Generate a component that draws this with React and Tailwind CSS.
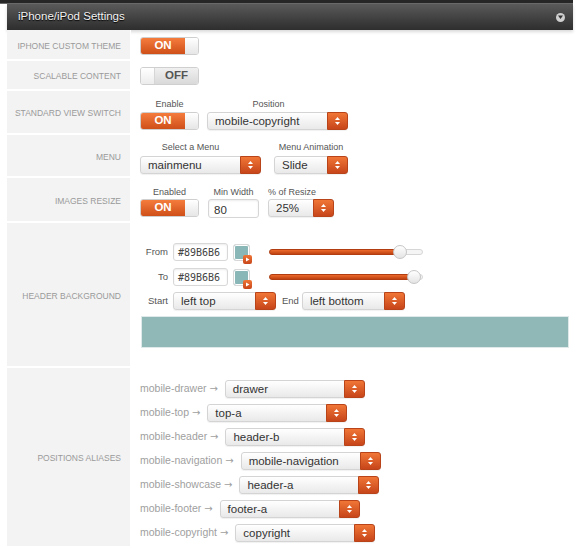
import React from "react";

const FONT = { fontFamily: '"Liberation Sans", Arial, sans-serif' };

function Arrows() {
  return (
    <svg width="7" height="10" viewBox="0 0 7 10">
      <path d="M1 4 L3.5 1 L6 4 Z" fill="#fff" />
      <path d="M1 6 L3.5 9 L6 6 Z" fill="#fff" />
    </svg>
  );
}

function Select({ value, w }) {
  return (
    <div className={`flex h-[18px] ${w} rounded-[3px] border border-[#d4d4d4] bg-linear-to-b from-white to-[#e9e9e9] shadow-[0_1px_1px_rgba(0,0,0,0.06)]`}>
      <span className="flex-1 pl-[7px] text-[11.5px] leading-[16px] text-[#333] whitespace-nowrap overflow-hidden">{value}</span>
      <span className="w-[21px] -my-px -mr-px rounded-r-[3px] bg-linear-to-b from-[#f07636] to-[#c7451a] border border-[#b9441a] flex items-center justify-center">
        <Arrows />
      </span>
    </div>
  );
}

function Toggle({ on }) {
  if (on) {
    return (
      <div className="flex h-[18px] w-[59px] rounded-[3px] border border-[#cfcfcf] overflow-hidden">
        <div className="w-[44px] bg-linear-to-b from-[#f47c3c] to-[#cf4f18] text-white font-bold text-[11.5px] flex items-center justify-center">ON</div>
        <div className="flex-1 bg-linear-to-b from-white to-[#e6e6e6]" />
      </div>
    );
  }
  return (
    <div className="flex h-[18px] w-[59px] rounded-[3px] border border-[#cfcfcf] overflow-hidden">
      <div className="w-[14px] bg-linear-to-b from-white to-[#ececec] border-r border-[#d6d6d6]" />
      <div className="flex-1 bg-linear-to-b from-[#f0f0f0] to-[#d9d9d9] text-[#555] font-bold text-[11.5px] flex items-center justify-center">OFF</div>
    </div>
  );
}

function Caption({ children, className = "" }) {
  return <div className={`text-[9px] leading-[12px] text-[#555] ${className}`}>{children}</div>;
}

function Swatch() {
  return (
    <div className="relative w-[17px] h-[17px] rounded-[3px] border border-[#d8d8d8] bg-[#89B6B6] shadow-[inset_0_0_0_1px_#fff]">
      <div className="absolute -right-[3px] -bottom-[4px] w-[9px] h-[9px] rounded-[2px] bg-linear-to-b from-[#f07636] to-[#c7451a] flex items-center justify-center">
        <svg width="5" height="5" viewBox="0 0 5 5">
          <path d="M1 0.5 L4.5 2.5 L1 4.5 Z" fill="#fff" />
        </svg>
      </div>
    </div>
  );
}

function Slider({ knob }) {
  return (
    <div className="relative w-[154px] h-[14px] flex items-center">
      <div className="h-[6px] w-full rounded-full border border-[#d6d6d6] bg-[#f5f5f5]" />
      <div className="absolute left-0 h-[6px] rounded-full bg-linear-to-b from-[#ec6a2c] to-[#bf4212] border border-[#b23d10]" style={{ width: knob + 4 }} />
      <div className="absolute top-0 w-[14px] h-[14px] rounded-full border border-[#c6c6c6] bg-linear-to-b from-white to-[#e4e4e4]" style={{ left: knob - 7 }} />
    </div>
  );
}

function HexInput() {
  return (
    <div className="w-[55px] h-[18px] rounded-[3px] border border-[#d8d8d8] bg-white shadow-[inset_0_1px_2px_rgba(0,0,0,0.08)] flex items-center pl-[4px]">
      <span className="text-[10px] text-[#444]" style={{ fontFamily: '"DejaVu Sans Mono", monospace' }}>#89B6B6</span>
    </div>
  );
}

function Row({ h, label, children, contentClass = "" }) {
  return (
    <div className={`flex ${h}`}>
      <div className="w-[123px] shrink-0 bg-[#f3f3f3] border-b-2 border-white flex items-center justify-end pr-[9px] pt-[3px] text-[8.5px] text-[#9a9a9a] uppercase">
        {label}
      </div>
      <div className={`flex-1 pl-[9px] border-l border-white ${contentClass}`}>{children}</div>
    </div>
  );
}

const aliases = [
  ["mobile-drawer", "drawer"],
  ["mobile-top", "top-a"],
  ["mobile-header", "header-b"],
  ["mobile-navigation", "mobile-navigation"],
  ["mobile-showcase", "header-a"],
  ["mobile-footer", "footer-a"],
  ["mobile-copyright", "copyright"],
];

export default function App() {
  return (
    <div className="w-[579px] h-[548px] overflow-hidden bg-white" style={FONT}>
      <div className="w-[573px] h-[4px] bg-[#262626] border-b border-[#6a6a6a]" />
      <div className="ml-[7px] w-[566px] h-[26px] bg-linear-to-b from-[#5a5a5a] to-[#2e2e2e] flex items-center justify-between pl-[11px] pr-[8px] shadow-[0_2px_3px_rgba(0,0,0,0.15)]">
        <span className="text-[11.5px] text-[#f2f2f2] [text-shadow:0_1px_1px_#000]">iPhone/iPod Settings</span>
        <span className="w-[9px] h-[9px] rounded-full bg-[#cfcfcf] flex items-center justify-center">
          <svg width="5" height="4" viewBox="0 0 5 4">
            <path d="M0 0.5 L5 0.5 L2.5 4 Z" fill="#333" />
          </svg>
        </span>
      </div>

      <div className="ml-[7px] w-[566px]">
        <Row h="h-[31px]" label="iPhone Custom Theme" contentClass="flex items-center">
          <Toggle on />
        </Row>
        <Row h="h-[30px]" label="Scalable Content" contentClass="flex items-center">
          <Toggle on={false} />
        </Row>
        <Row h="h-[44px]" label="Standard View Switch" contentClass="pt-[7px] flex gap-[8px]">
          <div className="flex flex-col items-center gap-[2px]">
            <Caption>Enable</Caption>
            <Toggle on />
          </div>
          <div className="flex flex-col items-center gap-[2px]">
            <Caption className="pr-[18px]">Position</Caption>
            <Select value="mobile-copyright" w="w-[141px]" />
          </div>
        </Row>
        <Row h="h-[43px]" label="Menu" contentClass="pt-[6px] flex gap-[13px]">
          <div className="flex flex-col items-center gap-[3px]">
            <Caption className="pr-[20px]">Select a Menu</Caption>
            <Select value="mainmenu" w="w-[121px]" />
          </div>
          <div className="flex flex-col items-center gap-[3px]">
            <Caption className="whitespace-nowrap">Menu Animation</Caption>
            <Select value="Slide" w="w-[74px]" />
          </div>
        </Row>
        <Row h="h-[45px]" label="Images Resize" contentClass="pt-[8px] flex gap-[9px]">
          <div className="flex flex-col items-center gap-[1px]">
            <Caption>Enabled</Caption>
            <Toggle on />
          </div>
          <div className="flex flex-col items-center gap-[1px]">
            <Caption>Min Width</Caption>
            <div className="w-[51px] h-[19px] rounded-[3px] border border-[#d6d6d6] bg-white shadow-[inset_0_1px_2px_rgba(0,0,0,0.08)] pl-[5px] pt-[2px] text-[11.5px] text-[#333]">80</div>
          </div>
          <div className="flex flex-col items-start gap-[1px]">
            <Caption>% of Resize</Caption>
            <Select value="25%" w="w-[66px]" />
          </div>
        </Row>
        <Row h="h-[145px]" label="Header Background" contentClass="pt-[20px] flex flex-col">
          <div className="flex items-center h-[18px]">
            <span className="w-[28px] text-right text-[9.5px] text-[#555]">From</span>
            <div className="ml-[5px]"><HexInput /></div>
            <div className="ml-[5px]"><Swatch /></div>
            <div className="ml-[19px]"><Slider knob={131} /></div>
          </div>
          <div className="flex items-center h-[18px] mt-[7px]">
            <span className="w-[28px] text-right text-[9.5px] text-[#555]">To</span>
            <div className="ml-[5px]"><HexInput /></div>
            <div className="ml-[5px]"><Swatch /></div>
            <div className="ml-[19px]"><Slider knob={145} /></div>
          </div>
          <div className="flex items-center h-[18px] mt-[6px]">
            <span className="w-[28px] text-right text-[9.5px] text-[#555]">Start</span>
            <div className="ml-[5px]"><Select value="left top" w="w-[103px]" /></div>
            <span className="ml-[6px] text-[9.5px] text-[#555]">End</span>
            <div className="ml-[3px]"><Select value="left bottom" w="w-[103px]" /></div>
          </div>
          <div className="ml-[1px] mt-[6px] w-[428px] h-[32px] bg-[#8FB8B7] border border-[#dfe9e9]" />
        </Row>
        <Row h="h-[180px]" label="Positions Aliases" contentClass="pt-[12px] flex flex-col gap-[6px]">
          {aliases.map(([name, val]) => (
            <div key={name} className="flex items-center gap-[7px] h-[18px]">
              <span className="text-[10.5px] text-[#a0a0a0] whitespace-nowrap">
                {name}{" "}
                <span className="text-[10px]" style={{ fontFamily: '"DejaVu Sans", sans-serif' }}>→</span>
              </span>
              <Select value={val} w="w-[140px]" />
            </div>
          ))}
        </Row>
      </div>
    </div>
  );
}
